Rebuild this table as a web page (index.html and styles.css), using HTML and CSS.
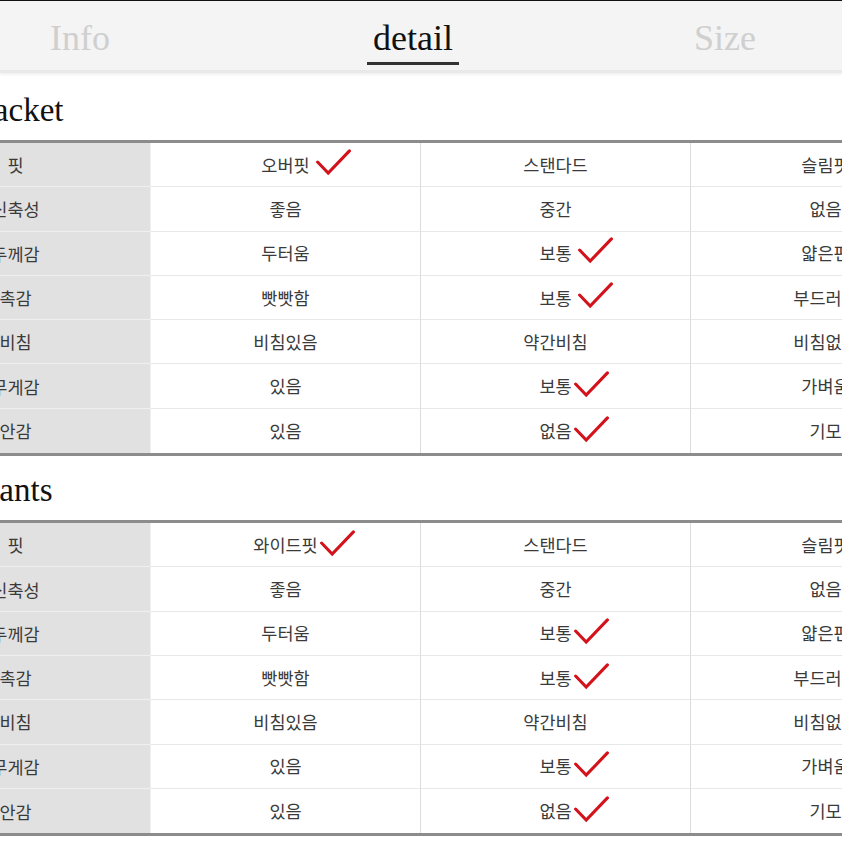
FILE: index.html
```html
<!DOCTYPE html>
<html lang="ko">
<head>
<meta charset="utf-8">
<link rel="stylesheet" href="styles.css">
</head>
<body>
<nav class="tabs">
  <div class="tab tab-info"><span class="tab-label">Info</span></div>
  <div class="tab tab-detail"><span class="tab-label active">detail</span></div>
  <div class="tab tab-size"><span class="tab-label">Size</span></div>
</nav>
<main class="content">
  <section class="block">
    <h2 class="block-title">Jacket</h2>
    <div class="spec">
      <div class="cell head">핏</div><div class="cell"><span class="val">오버핏<svg class="chk sp" viewBox="0 0 36 28"><path d="M1.5 13.5 L12.5 25 L34.5 2"/></svg></span></div><div class="cell"><span class="val">스탠다드</span></div><div class="cell"><span class="val">슬림핏</span></div>
      <div class="cell head">신축성</div><div class="cell"><span class="val">좋음</span></div><div class="cell"><span class="val">중간</span></div><div class="cell"><span class="val">없음</span></div>
      <div class="cell head">두께감</div><div class="cell"><span class="val">두터움</span></div><div class="cell"><span class="val">보통<svg class="chk sp" viewBox="0 0 36 28"><path d="M1.5 13.5 L12.5 25 L34.5 2"/></svg></span></div><div class="cell"><span class="val">얇은편</span></div>
      <div class="cell head">촉감</div><div class="cell"><span class="val">빳빳함</span></div><div class="cell"><span class="val">보통<svg class="chk sp" viewBox="0 0 36 28"><path d="M1.5 13.5 L12.5 25 L34.5 2"/></svg></span></div><div class="cell"><span class="val">부드러움</span></div>
      <div class="cell head">비침</div><div class="cell"><span class="val">비침있음</span></div><div class="cell"><span class="val">약간비침</span></div><div class="cell"><span class="val">비침없음</span></div>
      <div class="cell head">무게감</div><div class="cell"><span class="val">있음</span></div><div class="cell"><span class="val">보통<svg class="chk" viewBox="0 0 36 28"><path d="M1.5 13.5 L12.5 25 L34.5 2"/></svg></span></div><div class="cell"><span class="val">가벼움</span></div>
      <div class="cell head">안감</div><div class="cell"><span class="val">있음</span></div><div class="cell"><span class="val">없음<svg class="chk" viewBox="0 0 36 28"><path d="M1.5 13.5 L12.5 25 L34.5 2"/></svg></span></div><div class="cell"><span class="val">기모</span></div>
    </div>
  </section>
  <section class="block">
    <h2 class="block-title">Pants</h2>
    <div class="spec">
      <div class="cell head">핏</div><div class="cell"><span class="val">와이드핏<svg class="chk" viewBox="0 0 36 28"><path d="M1.5 13.5 L12.5 25 L34.5 2"/></svg></span></div><div class="cell"><span class="val">스탠다드</span></div><div class="cell"><span class="val">슬림핏</span></div>
      <div class="cell head">신축성</div><div class="cell"><span class="val">좋음</span></div><div class="cell"><span class="val">중간</span></div><div class="cell"><span class="val">없음</span></div>
      <div class="cell head">두께감</div><div class="cell"><span class="val">두터움</span></div><div class="cell"><span class="val">보통<svg class="chk" viewBox="0 0 36 28"><path d="M1.5 13.5 L12.5 25 L34.5 2"/></svg></span></div><div class="cell"><span class="val">얇은편</span></div>
      <div class="cell head">촉감</div><div class="cell"><span class="val">빳빳함</span></div><div class="cell"><span class="val">보통<svg class="chk" viewBox="0 0 36 28"><path d="M1.5 13.5 L12.5 25 L34.5 2"/></svg></span></div><div class="cell"><span class="val">부드러움</span></div>
      <div class="cell head">비침</div><div class="cell"><span class="val">비침있음</span></div><div class="cell"><span class="val">약간비침</span></div><div class="cell"><span class="val">비침없음</span></div>
      <div class="cell head">무게감</div><div class="cell"><span class="val">있음</span></div><div class="cell"><span class="val">보통<svg class="chk" viewBox="0 0 36 28"><path d="M1.5 13.5 L12.5 25 L34.5 2"/></svg></span></div><div class="cell"><span class="val">가벼움</span></div>
      <div class="cell head">안감</div><div class="cell"><span class="val">있음</span></div><div class="cell"><span class="val">없음<svg class="chk" viewBox="0 0 36 28"><path d="M1.5 13.5 L12.5 25 L34.5 2"/></svg></span></div><div class="cell"><span class="val">기모</span></div>
    </div>
  </section>
</main>
</body>
</html>
```
FILE: styles.css
```css
html, body {
  margin: 0;
  padding: 0;
  background: #ffffff;
}
body {
  width: 842px;
  height: 842px;
  overflow: hidden;
  font-family: "Noto Sans CJK KR", "Noto Sans", sans-serif;
}
.tabs {
  display: grid;
  grid-template-columns: 160px 506px 118px;
  height: 70px;
  background: #f4f4f4;
  border-top: 1px solid #111;
  box-sizing: border-box;
  box-shadow: 0 3px 0 #e9e9e9, 0 5px 2px #f2f2f2;
  font-family: "Liberation Serif", serif;
}
.tab {
  display: flex;
  justify-content: center;
  align-items: flex-start;
}
.tab-label {
  padding: 15px 6px 0;
  height: 49px;
  font-size: 36px;
  line-height: 45px;
  color: #cfcfcf;
  box-sizing: border-box;
}
.tab-label.active {
  color: #111;
  height: 64px;
  border-bottom: 3px solid #333;
}
.content {
  margin-left: -119px;
  width: 1080px;
  padding-top: 17px;
}
.block-title {
  margin: 0;
  padding-left: 100px;
  height: 53px;
  font-family: "Liberation Serif", serif;
  font-weight: normal;
  font-size: 33px;
  line-height: 46px;
  color: #111;
}
.block + .block .block-title {
  margin-top: 11px;
}
.spec {
  display: grid;
  grid-template-columns: repeat(4, 270px);
  grid-auto-rows: 44.3px;
  border-top: 3px solid #8c8c8c;
  border-bottom: 3px solid #8c8c8c;
}
.cell {
  display: flex;
  align-items: center;
  justify-content: center;
  box-sizing: border-box;
  border-bottom: 1px solid #e8e8e8;
  border-right: 1px solid #dcdcdc;
  font-size: 17.5px;
  color: #3a3a3a;
  background: #fff;
}
.cell:nth-last-child(-n+4) {
  border-bottom: none;
}
.cell.head {
  background: #e1e1e1;
  border-bottom-color: #efefef;
  border-right-color: #efefef;
}
.val {
  position: relative;
  line-height: 24px;
}
.chk {
  position: absolute;
  left: calc(100% + 2px);
  top: -3px;
  width: 35px;
  height: 27px;
  fill: none;
  stroke: #d3121c;
  stroke-width: 3.2;
  stroke-linecap: round;
  stroke-linejoin: miter;
}
.chk.sp {
  left: calc(100% + 6px);
  top: -4px;
}
```
